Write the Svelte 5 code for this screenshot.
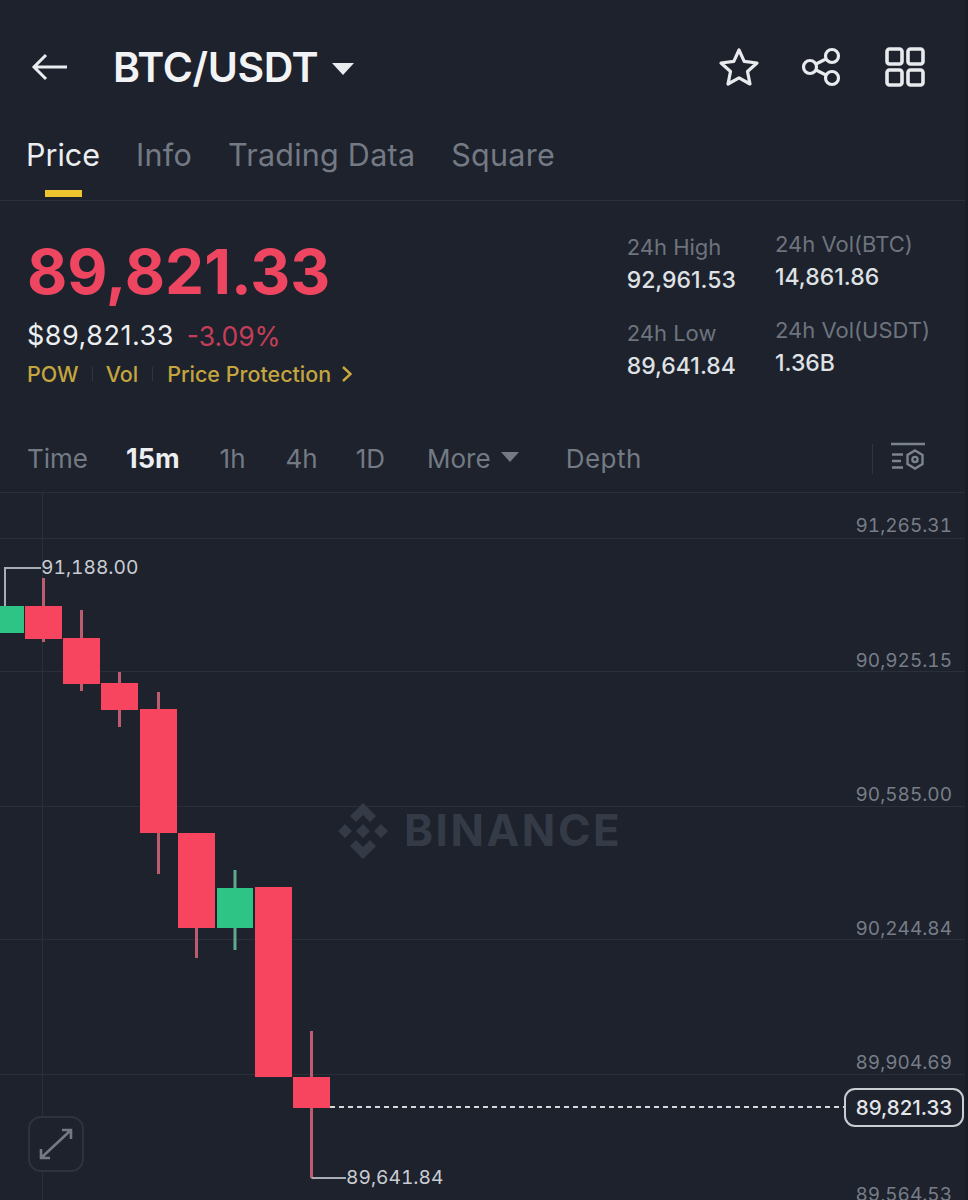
<script>
  const tabs = ['Price', 'Info', 'Trading Data', 'Square'];

  const intervals = [
    { label: 'Time', cls: 'time' },
    { label: '15m', cls: 'm15 on' },
    { label: '1h', cls: 'h1' },
    { label: '4h', cls: 'h4' },
    { label: '1D', cls: 'd1' }
  ];

  // page coordinates, the chart's viewBox starts at y=492
  const gridY = [492, 538, 671, 806, 939, 1074];
  const axis = [
    { y: 532, text: '91,265.31' },
    { y: 667, text: '90,925.15' },
    { y: 801, text: '90,585.00' },
    { y: 935, text: '90,244.84' },
    { y: 1069, text: '89,904.69' },
    { y: 1201, text: '89,564.53' }
  ];

  const candles = [
    { x: 0, w: 24, top: 606, bottom: 633, up: true, wick: [] },
    { x: 25, w: 37, top: 606, bottom: 639, wick: [578, 642] },
    { x: 63, w: 37, top: 638, bottom: 684, wick: [610, 691] },
    { x: 101, w: 37, top: 683, bottom: 710, wick: [672, 727] },
    { x: 140, w: 37, top: 709, bottom: 833, wick: [692, 874] },
    { x: 178, w: 37, top: 833, bottom: 928, wick: [833, 958] },
    { x: 217, w: 36, top: 888, bottom: 928, up: true, wick: [870, 950] },
    { x: 255, w: 37, top: 887, bottom: 1077, wick: [887, 1077] },
    { x: 293, w: 37, top: 1077, bottom: 1108, wick: [1031, 1178] }
  ];
</script>

<div class="page">
  <header class="top">
    <svg class="back" width="38" height="30" viewBox="0 0 38 30" fill="none">
      <path d="M36 15H3M15 3 3 15l12 12" stroke="#eaecef" stroke-width="3" />
    </svg>
    <span class="pair">BTC/USDT</span>
    <span class="caret"></span>
    <div class="actions">
      <svg width="42" height="42" viewBox="0 0 42 42" fill="none" stroke="#e8eaed" stroke-width="3.2" stroke-linejoin="round">
        <path d="M21 4 26.200 15.300 39 17 29.500 25.500 32 38 21 31.800 10 38 12.500 25.500 3 17 15.800 15.300Z" />
      </svg>
      <svg width="42" height="42" viewBox="0 0 42 42" fill="none" stroke="#e8eaed" stroke-width="3.2">
        <circle cx="31" cy="10" r="6.500" />
        <circle cx="31" cy="32" r="6.500" />
        <circle cx="9" cy="21" r="6.500" />
        <path d="M15 18 25.400 12.800M15 24 25.400 29.200" />
      </svg>
      <svg width="42" height="42" viewBox="0 0 42 42" fill="none" stroke="#e8eaed" stroke-width="3.6">
        <rect x="3" y="3" width="15" height="15" rx="2.500" />
        <rect x="24" y="3" width="15" height="15" rx="2.500" />
        <rect x="3" y="24" width="15" height="15" rx="2.500" />
        <rect x="24" y="24" width="15" height="15" rx="2.500" />
      </svg>
    </div>
  </header>

  <nav class="tabs">
    {#each tabs as tab, i}
      <span class="tab" class:active={i === 0}>{tab}</span>
    {/each}
  </nav>

  <section class="summary">
    <div class="left">
      <div class="last">89,821.33</div>
      <div class="sub">
        <span class="usd">$89,821.33</span>
        <span class="pct">-3.09%</span>
      </div>
      <div class="tags">
        <span>POW</span>
        <i></i>
        <span>Vol</span>
        <i></i>
        <span>Price Protection</span>
        <svg width="12" height="18" viewBox="0 0 12 18" fill="none">
          <path d="M2 2l7.500 7L2 16" stroke="#c9a93d" stroke-width="2.400" />
        </svg>
      </div>
    </div>
    <div class="stats">
      <div class="col">
        <div class="label">24h High</div>
        <div class="value">92,961.53</div>
        <div class="label second">24h Low</div>
        <div class="value">89,641.84</div>
      </div>
      <div class="col raised">
        <div class="label">24h Vol(BTC)</div>
        <div class="value">14,861.86</div>
        <div class="label second">24h Vol(USDT)</div>
        <div class="value">1.36B</div>
      </div>
    </div>
  </section>

  <div class="toolbar">
    {#each intervals as item}
      <span class="iv {item.cls}">{item.label}</span>
    {/each}
    <span class="iv more">More</span>
    <span class="more-caret"></span>
    <span class="iv depth">Depth</span>
    <span class="sep"></span>
    <svg class="settings" width="38" height="36" viewBox="0 0 38 36" fill="none" stroke="#7d838c" stroke-width="2.400">
      <path d="M2 3H36M3 13.500H14M3 20H12M3 26.500H14" />
      <path d="M26 9.500 33.500 14V23L26 27.500 18.500 23V14Z" />
      <circle cx="26" cy="18.500" r="2.600" />
    </svg>
  </div>

  <div class="chart">
    <svg class="plot" width="968" height="708" viewBox="0 492 968 708">
      {#each gridY as y}
        <line class="grid" x1="0" x2="968" y1={y + 0.5} y2={y + 0.5} />
      {/each}
      <line class="grid" x1="42.500" x2="42.500" y1="492" y2="1200" />

      <g class="mark">
        <path class="watermark" d="M363 803 376 816 370 822 363 815 356 822 350 816ZM345 824 352 831 345 838 338 831ZM381 824 388 831 381 838 374 831ZM363 824 370 831 363 838 356 831ZM350 846 356 840 363 847 370 840 376 846 363 859Z" />
        <text class="brand" x="404" y="846">BINANCE</text>
      </g>

      {#each axis as a}
        <text class="price" x="952" y={a.y} text-anchor="end">{a.text}</text>
      {/each}

      {#each candles as c}
        {#if c.wick.length}
          <line class="wick" class:up={c.up} x1={c.x + c.w / 2} x2={c.x + c.w / 2} y1={c.wick[0]} y2={c.wick[1]} />
        {/if}
        <rect class="body" class:up={c.up} x={c.x} y={c.top} width={c.w} height={c.bottom - c.top} />
      {/each}

      <path class="lead" d="M5 606V568H41" />
      <text class="extreme" x="41" y="574">91,188.00</text>
      <path class="lead" d="M311.500 1178H346" />
      <text class="extreme" x="346" y="1184">89,641.84</text>

      <line class="dash" x1="330" x2="845" y1="1107" y2="1107" />
    </svg>

    <div class="tag">89,821.33</div>

    <div class="expand">
      <svg width="36" height="34" viewBox="0 0 36 34" fill="none" stroke="#747a84" stroke-width="2.600">
        <path d="M3 31 33 3M24 3H33V12M3 22V31H12" />
      </svg>
    </div>
  </div>
</div>

<style>
  :global(body) {
    margin: 0;
    background: #1d222d;
  }

  .page {
    width: 968px;
    height: 1200px;
    box-sizing: border-box;
    overflow: hidden;
    border-right: 3px solid #191e27;
    background: #1d222d;
    font-family: Inter, "Liberation Sans", sans-serif;
    color: #eaecef;
  }

  .top {
    display: flex;
    align-items: center;
    height: 62px;
    padding: 36px 39px 0 31px;
  }

  .back {
    margin-right: 44px;
  }

  .pair {
    font-size: 41px;
    font-weight: 600;
    letter-spacing: -0.4px;
    color: #f2f3f5;
  }

  .caret {
    width: 0;
    height: 0;
    margin: 3px 0 0 14px;
    border-left: 11px solid transparent;
    border-right: 11px solid transparent;
    border-top: 12px solid #eaecef;
  }

  .actions {
    display: flex;
    gap: 41px;
    margin-left: auto;
  }

  .tabs {
    display: flex;
    gap: 36px;
    height: 103px;
    padding-left: 26px;
    box-sizing: border-box;
    border-bottom: 1px solid #2c323c;
    align-items: flex-start;
    padding-top: 38px;
  }

  .tab {
    position: relative;
    font-size: 30.500px;
    letter-spacing: 0.25px;
    line-height: 38px;
    color: #747a84;
  }

  .tab.active {
    letter-spacing: 0;
    color: #eceef0;
  }

  .tab.active::after {
    content: '';
    position: absolute;
    left: 19px;
    top: 54px;
    width: 37px;
    height: 7px;
    background: #eec52f;
  }

  .summary {
    display: flex;
    justify-content: space-between;
    height: 204px;
    padding: 0 35px 0 27px;
  }

  .last {
    margin-top: 37px;
    font-size: 62px;
    line-height: 68px;
    font-weight: 700;
    color: #ee4660;
  }

  .sub {
    display: flex;
    gap: 13px;
    margin-top: 13px;
    font-size: 27px;
    line-height: 34px;
  }

  .usd {
    color: #eceef0;
    letter-spacing: 0.5px;
  }

  .pct {
    font-size: 26.500px;
    color: #c43e58;
  }

  .tags {
    display: flex;
    align-items: center;
    margin-top: 6px;
    font-size: 21.500px;
    line-height: 30px;
    font-weight: 500;
    color: #c4a53e;
  }

  .tags i {
    width: 1px;
    height: 14px;
    margin: 0 13px;
    background: #2f3641;
  }

  .tags i:nth-of-type(2) {
    margin: 0 14px;
  }

  .tags svg {
    margin-left: 10px;
  }

  .stats {
    display: flex;
    gap: 39px;
    padding-top: 31px;
  }

  .col.raised {
    margin-top: -3px;
  }

  .label {
    font-size: 22px;
    line-height: 30px;
    color: #6e747e;
  }

  .label.second {
    margin: 23px 0 1px;
  }

  .value {
    margin-top: 3px;
    font-size: 23px;
    line-height: 30px;
    font-weight: 500;
    color: #dfe1e4;
  }

  .toolbar {
    position: relative;
    display: flex;
    align-items: center;
    height: 87px;
    padding: 20px 0 0 27px;
    box-sizing: border-box;
  }

  .iv {
    font-size: 26px;
    color: #747a84;
  }

  .iv.on {
    font-size: 27px;
    font-weight: 700;
    color: #eceef0;
  }

  .iv.depth {
    letter-spacing: 0.5px;
  }

  .time { margin-right: 38px; }
  .m15 { margin-right: 40px; }
  .h1 { margin-right: 40px; }
  .h4 { margin-right: 38px; }
  .d1 { margin-right: 42px; }

  .more-caret {
    width: 0;
    height: 0;
    margin: 0 47px 4px 10px;
    border-left: 9px solid transparent;
    border-right: 9px solid transparent;
    border-top: 10px solid #747a84;
  }

  .sep {
    width: 1px;
    height: 30px;
    margin-left: auto;
    background: #2f3641;
  }

  .settings {
    margin: 0 38px 0 16px;
  }

  .chart {
    position: relative;
    height: 708px;
  }

  .plot {
    display: block;
  }

  .grid {
    stroke: #2a303a;
    stroke-width: 1;
  }

  .watermark {
    fill: #343b47;
  }

  .brand {
    font-size: 44px;
    font-weight: 700;
    letter-spacing: 2.500px;
    fill: #343b47;
  }

  .price {
    font-size: 19px;
    font-variant-numeric: tabular-nums;
    fill: #777d87;
  }

  .extreme {
    font-size: 19.200px;
    font-variant-numeric: tabular-nums;
    fill: #c9ccd1;
  }

  .lead {
    fill: none;
    stroke: #a9adb4;
    stroke-width: 2;
  }

  .dash {
    stroke: #d6d8dc;
    stroke-width: 2;
    stroke-dasharray: 5 4;
  }

  .body {
    fill: #f8455f;
  }

  .body.up {
    fill: #2ec485;
  }

  .wick {
    stroke: #bc5c6e;
    stroke-width: 3;
  }

  .wick.up {
    stroke: #5fa98f;
  }

  .tag {
    position: absolute;
    left: 844px;
    top: 596px;
    width: 120px;
    height: 39px;
    box-sizing: border-box;
    border: 2px solid #c9ccd1;
    border-radius: 11px;
    background: #1d222d;
    font-size: 20.500px;
    font-weight: 500;
    line-height: 35px;
    text-align: center;
    color: #e4e6e9;
  }

  .expand {
    position: absolute;
    left: 28px;
    top: 624px;
    display: flex;
    align-items: center;
    justify-content: center;
    width: 56px;
    height: 56px;
    box-sizing: border-box;
    border: 2px solid #2e343f;
    border-radius: 13px;
    background: #1d222d;
  }
</style>
